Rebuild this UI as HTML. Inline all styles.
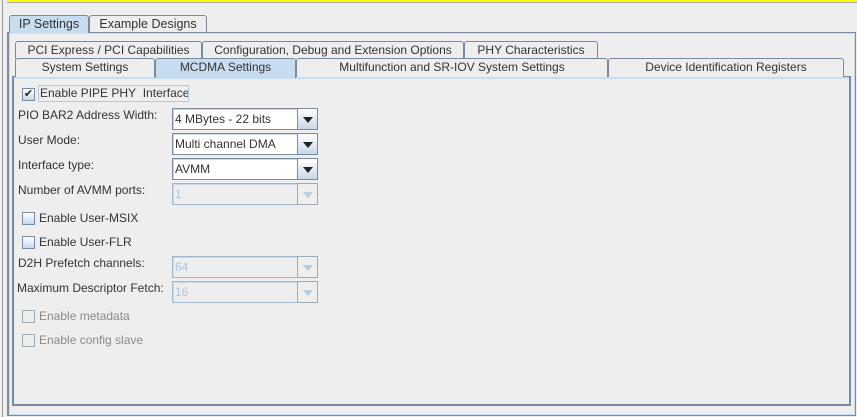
<!DOCTYPE html>
<html><head><style>
*{box-sizing:border-box;margin:0;padding:0}
body{width:857px;height:417px;background:#eeeeee;position:relative;overflow:hidden;font-family:"Liberation Sans",Arial,sans-serif;font-size:12px;color:#333;white-space:nowrap}
.a{position:absolute}
.tab{position:absolute;border:1px solid #7a8aa0;border-bottom:none;background:#eeeeee;text-align:center;line-height:16px;border-radius:3px 3px 0 0}
.sel{background:#c8dcf0}
.lbl{position:absolute;left:18px}
.dis{color:#8a8a8a}
.cb{position:absolute;left:22px;width:13px;height:13px;border:1px solid #7a8aa0;background:linear-gradient(#fff,#c8d8e8)}
.cbd{background:#eee;border-color:#a0a8b0}
.combo{position:absolute;left:172px;width:146px;height:22px}
.combo .t{position:absolute;left:0;top:0;width:126px;height:22px;border:1px solid #7a8aa0;background:#fff;border-right:none;padding-left:2px;line-height:20px;box-shadow:inset 1px 1px 0 #c8d8e8}
.combo .b{position:absolute;left:125px;top:0;width:21px;height:22px;border:1px solid #7a8aa0;background:linear-gradient(#fff,#c8d8e8)}
.combo .b:after{content:"";position:absolute;left:5px;top:8px;border-left:5px solid transparent;border-right:5px solid transparent;border-top:6px solid #222}
.combo.d .t{background:#eee;color:#b0c4dc;border-color:#a0b8d0}
.combo.d .b{background:#eee;border-color:#a0a8b0}
.combo.d .b:after{border-top-color:#b8cce0}
</style></head><body>
<div class="a" style="left:2px;top:0;width:1px;height:417px;background:#999"></div>
<div class="a" style="left:7px;top:0;width:850px;height:2px;background:#ffff00"></div>
<div class="a" style="left:7px;top:2px;width:850px;height:1px;background:#aaa"></div>
<div class="a" style="left:7px;top:32px;width:849px;height:384px;border:1px solid #7a8aa0;border-left:2px solid #7a8aa0;box-shadow:inset 1px 1px 0 #c8dcf0,inset -1px -1px 0 #c8dcf0"></div>
<div class="tab sel" style="left:9px;top:15px;width:80px;height:18px;font-size:12.5px">IP Settings</div>
<div class="tab" style="left:89px;top:15px;width:118px;height:17px;font-size:12.5px">Example Designs</div>
<div class="a" style="left:12px;top:76px;width:839px;height:330px;border:1px solid #7a8aa0;border-left:2px solid #7a8aa0;border-bottom:2px solid #7a8aa0;border-right:2px solid #7a8aa0;box-shadow:inset 0 2px 0 #c8dcf0"></div>
<div class="tab" style="left:15px;top:41px;width:187px;height:18px">PCI Express / PCI Capabilities</div>
<div class="tab" style="left:202px;top:41px;width:262px;height:18px">Configuration, Debug and Extension Options</div>
<div class="tab" style="left:464px;top:41px;width:134px;height:18px">PHY Characteristics</div>
<div class="tab" style="left:15px;top:58px;width:140px;height:19px">System Settings</div>
<div class="tab sel" style="left:155px;top:58px;width:141px;height:20px">MCDMA Settings</div>
<div class="tab" style="left:296px;top:58px;width:312px;height:19px">Multifunction and SR-IOV System Settings</div>
<div class="tab" style="left:608px;top:58px;width:236px;height:19px">Device Identification Registers</div>

<div class="cb" style="top:88px;font-size:11px;line-height:10px;text-align:center;color:#222">✔</div>
<div class="a" style="left:38px;top:85px;width:151px;height:17px;border:1px solid #b0c8e0;line-height:15px;padding-left:1px;overflow:hidden">Enable PIPE PHY&nbsp; Interface</div>

<div class="lbl" style="top:108px">PIO BAR2 Address Width:</div>
<div class="combo" style="top:108px"><div class="t">4 MBytes - 22 bits</div><div class="b"></div></div>
<div class="lbl" style="top:133px">User Mode:</div>
<div class="combo" style="top:133px"><div class="t">Multi channel DMA</div><div class="b"></div></div>
<div class="lbl" style="top:158px">Interface type:</div>
<div class="combo" style="top:158px"><div class="t">AVMM</div><div class="b"></div></div>
<div class="lbl" style="top:183px">Number of AVMM ports:</div>
<div class="combo d" style="top:183px"><div class="t">1</div><div class="b"></div></div>

<div class="cb" style="top:212px"></div><div class="a" style="left:39px;top:211px">Enable User-MSIX</div>
<div class="cb" style="top:236px"></div><div class="a" style="left:39px;top:235px">Enable User-FLR</div>

<div class="lbl" style="top:256px">D2H Prefetch channels:</div>
<div class="combo d" style="top:256px"><div class="t">64</div><div class="b"></div></div>
<div class="lbl" style="top:281px;left:17px">Maximum Descriptor Fetch:</div>
<div class="combo d" style="top:281px"><div class="t">16</div><div class="b"></div></div>

<div class="cb cbd" style="top:310px"></div><div class="a dis" style="left:39px;top:309px">Enable metadata</div>
<div class="cb cbd" style="top:334px"></div><div class="a dis" style="left:39px;top:333px">Enable config slave</div>
</body></html>
